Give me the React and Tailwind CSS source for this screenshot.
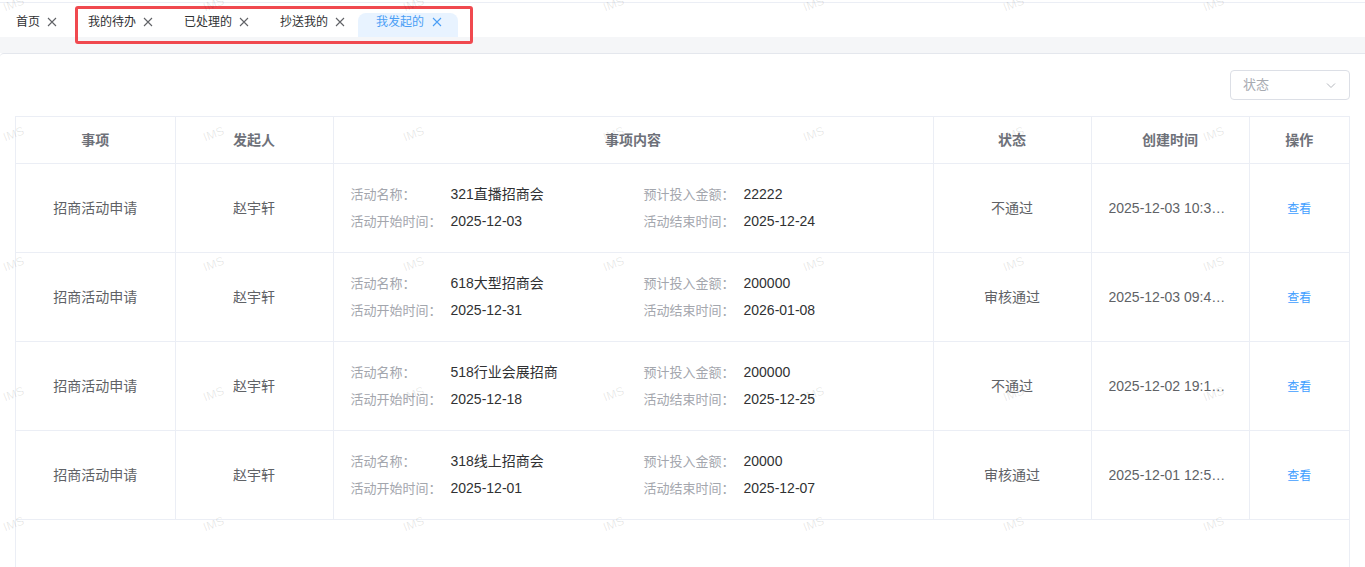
import React from 'react';

const tabs = [
  { label: '首页', first: true },
  { label: '我的待办' },
  { label: '已处理的' },
  { label: '抄送我的' },
  { label: '我发起的', active: true },
];

const rows = [
  { name: '321直播招商会', amount: '22222', start: '2025-12-03', end: '2025-12-24', status: '不通过', created: '2025-12-03 10:34:12' },
  { name: '618大型招商会', amount: '200000', start: '2025-12-31', end: '2026-01-08', status: '审核通过', created: '2025-12-03 09:45:30' },
  { name: '518行业会展招商', amount: '200000', start: '2025-12-18', end: '2025-12-25', status: '不通过', created: '2025-12-02 19:12:08' },
  { name: '318线上招商会', amount: '20000', start: '2025-12-01', end: '2025-12-07', status: '审核通过', created: '2025-12-01 12:56:41' },
];

const CloseX = ({ className }) => (
  <svg className={className} width="10" height="10" viewBox="0 0 10 10" fill="none" stroke="currentColor" strokeWidth="1.1">
    <path d="M1 1l8 8M9 1l-8 8" />
  </svg>
);

const Field = ({ label, value }) => (
  <div className="flex items-center h-[27px]">
    <span className="w-[100px] shrink-0 text-[13px] text-[#a3a6ad]">{label}</span>
    <span className="text-[14px] text-[#303133] whitespace-nowrap">{value}</span>
  </div>
);

const Watermarks = () => {
  const items = [];
  for (let r = 0; r < 5; r++) {
    for (let c = 0; c < 7; c++) {
      items.push(
        <span
          key={`${r}-${c}`}
          className="absolute text-[12px] text-black/10 -rotate-[20deg]"
          style={{ left: 3 + c * 200, top: -5 + r * 130 }}
        >
          IMS
        </span>
      );
    }
  }
  return <div className="pointer-events-none absolute inset-0 overflow-hidden">{items}</div>;
};

export default function App() {
  return (
    <div className="relative w-[1365px] h-[567px] overflow-hidden bg-white font-['Liberation_Sans','Noto_Sans_CJK_SC',sans-serif]">
      {/* tab bar */}
      <div className="mt-[2px] border-t border-[#ebeef5] h-[35px] flex bg-white">
        {tabs.map((t) => (
          <div
            key={t.label}
            className={
              t.active
                ? 'relative w-[100px] h-full pl-[18px] pt-[3px] flex items-center gap-[8px] text-[#4a9ef5] -ml-[2px] text-[12px]'
                : t.first
                ? 'w-[72px] h-full pl-[16px] pt-[3px] flex items-center gap-[7px] text-[#303133] text-[12px]'
                : 'w-[96px] h-full pl-[16px] pt-[3px] flex items-center gap-[7px] text-[#303133] text-[12px]'
            }
          >
            {t.active && <span className="absolute inset-x-0 top-[10px] bottom-0 bg-[#e8f3ff] rounded-t-[8px]" />}
            <span className="relative">{t.label}</span>
            <CloseX className={t.active ? 'relative text-[#4a9ef5] mt-px' : 'text-[#606266] mt-px'} />
          </div>
        ))}
      </div>
      <div className="h-[16px] bg-[#f5f6f8]" />

      {/* annotation box */}
      <div className="pointer-events-none absolute left-[75px] top-[6px] w-[398px] h-[38px] border-[3px] border-[#f0494f] rounded-[3px]" />

      {/* card */}
      <div className="border-t border-[#e4e7ed] rounded-tl-[4px] px-[15px] pt-[16px]">
        <div className="flex justify-end">
          <div className="w-[120px] h-[30px] border border-[#dcdfe6] rounded-[4px] flex items-center justify-between px-[12px]">
            <span className="text-[13px] text-[#a8abb2]">状态</span>
            <svg width="12" height="12" viewBox="0 0 12 12" fill="none" stroke="#b4b7bd" strokeWidth="1">
              <path d="M2 4.5l4 4 4-4" />
            </svg>
          </div>
        </div>

        <div className="mt-[16px] h-[460px] border-l border-r border-[#ebeef5]">
          <table className="table-fixed border-collapse w-[1333px]">
            <colgroup>
              <col className="w-[159px]" />
              <col className="w-[158px]" />
              <col className="w-[600px]" />
              <col className="w-[158px]" />
              <col className="w-[158px]" />
              <col className="w-[100px]" />
            </colgroup>
            <thead>
              <tr className="h-[47px]">
                {['事项', '发起人', '事项内容', '状态', '创建时间', '操作'].map((h) => (
                  <th key={h} className="border border-[#ebeef5] border-l-0 last:border-r-0 text-[14px] font-bold text-[#6e7179] text-center">
                    {h}
                  </th>
                ))}
              </tr>
            </thead>
            <tbody>
              {rows.map((r) => (
                <tr key={r.name} className="h-[89px]">
                  <td className="border border-[#ebeef5] border-l-0 text-center text-[14px] text-[#606266]">招商活动申请</td>
                  <td className="border border-[#ebeef5] text-center text-[14px] text-[#606266]">赵宇轩</td>
                  <td className="border border-[#ebeef5] pl-[17px]">
                    <div className="grid grid-cols-[293px_1fr]">
                      <Field label="活动名称：" value={r.name} />
                      <Field label="预计投入金额：" value={r.amount} />
                      <Field label="活动开始时间：" value={r.start} />
                      <Field label="活动结束时间：" value={r.end} />
                    </div>
                  </td>
                  <td className="border border-[#ebeef5] text-center text-[14px] text-[#606266]">{r.status}</td>
                  <td className="border border-[#ebeef5] pl-[17px] pr-[20px]">
                    <div className="truncate text-[14px] text-[#606266]">{r.created}</div>
                  </td>
                  <td className="border border-[#ebeef5] border-r-0 text-center">
                    <span className="text-[12px] text-[#409eff]">查看</span>
                  </td>
                </tr>
              ))}
            </tbody>
          </table>
        </div>
      </div>

      <Watermarks />
    </div>
  );
}
